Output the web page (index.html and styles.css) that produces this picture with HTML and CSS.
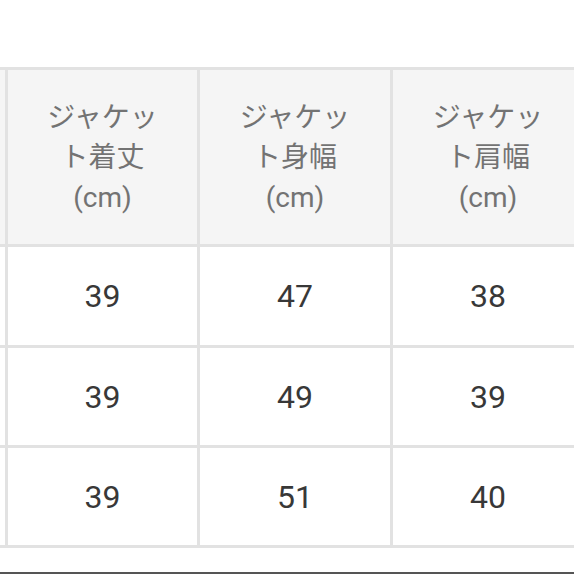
FILE: index.html
```html
<!DOCTYPE html>
<html lang="ja">
<head>
<meta charset="utf-8">
<link rel="stylesheet" href="styles.css">
</head>
<body>
<div class="page">
  <div class="grid">
    <div class="cell head"></div>
    <div class="cell head">ジャケット着丈(cm)</div>
    <div class="cell head">ジャケット身幅(cm)</div>
    <div class="cell head">ジャケット肩幅(cm)</div>

    <div class="cell"></div>
    <div class="cell">39</div>
    <div class="cell">47</div>
    <div class="cell">38</div>

    <div class="cell"></div>
    <div class="cell">39</div>
    <div class="cell">49</div>
    <div class="cell">39</div>

    <div class="cell"></div>
    <div class="cell">39</div>
    <div class="cell">51</div>
    <div class="cell">40</div>
  </div>
  <div class="bottom-line"></div>
</div>
</body>
</html>
```

FILE: styles.css
```css
html, body {
  margin: 0;
  padding: 0;
  background: #ffffff;
  overflow: hidden;
  width: 574px;
  height: 574px;
}

.page {
  padding-top: 67px;
  font-family: Roboto, "Noto Sans CJK JP", sans-serif;
}

.grid {
  display: grid;
  grid-template-columns: 189px 189px 190px 190px;
  grid-template-rows: 174px 98px 97px 97px;
  gap: 3px;
  padding: 3px;
  margin-left: -187px;
  width: max-content;
  background: #e2e2e2;
}

.cell {
  background: #ffffff;
  display: flex;
  align-items: center;
  justify-content: center;
  text-align: center;
  color: #383838;
  font-size: 32px;
}

.cell.head {
  background: #f5f5f5;
  color: #737373;
  font-size: 28px;
  line-height: 40px;
  padding: 2px 30px 0;
  box-sizing: border-box;
}

.bottom-line {
  margin-top: 24px;
  height: 2px;
  background: #555555;
}
```
